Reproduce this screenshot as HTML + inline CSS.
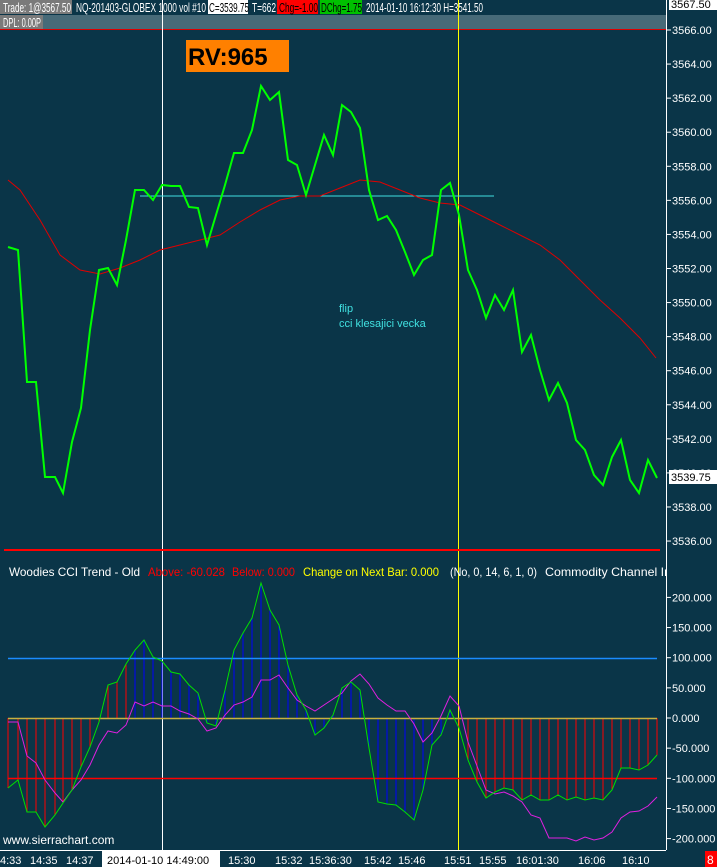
<!DOCTYPE html>
<html><head><meta charset="utf-8"><style>
body{margin:0;background:#0a3548;width:717px;height:867px;overflow:hidden;font-family:"Liberation Sans",sans-serif}
svg{display:block}
text{font-family:"Liberation Sans",sans-serif;font-size:11px}
.h{font-size:13px}
</style></head><body>
<svg id="s" width="717" height="867" xmlns="http://www.w3.org/2000/svg">
<defs><clipPath id="cp"><rect x="0" y="0" width="666" height="867"/></clipPath></defs>
<rect width="717" height="867" fill="#0a3548"/>
<rect x="0" y="0" width="72" height="14" fill="#7a7a7a"/>
<text class="h" x="3" y="12" fill="#fff" textLength="68" lengthAdjust="spacingAndGlyphs">Trade: 1@3567.50</text>
<text class="h" x="76" y="12" fill="#fff" textLength="130" lengthAdjust="spacingAndGlyphs">NQ-201403-GLOBEX  1000 vol  #10</text>
<rect x="208" y="0" width="40" height="14" fill="#fff"/>
<text class="h" x="209" y="12" fill="#000" textLength="40" lengthAdjust="spacingAndGlyphs">C=3539.75</text>
<text class="h" x="252" y="12" fill="#fff" textLength="24" lengthAdjust="spacingAndGlyphs">T=662</text>
<rect x="277" y="0" width="41" height="14" fill="#ff0000"/>
<text class="h" x="279" y="12" fill="#000" textLength="39" lengthAdjust="spacingAndGlyphs">Chg=-1.00</text>
<rect x="320" y="0" width="42" height="14" fill="#00c000"/>
<text class="h" x="321" y="12" fill="#000" textLength="41" lengthAdjust="spacingAndGlyphs">DChg=1.75</text>
<text class="h" x="366" y="12" fill="#fff" textLength="117" lengthAdjust="spacingAndGlyphs">2014-01-10 16:12:30 H=3541.50</text>
<rect x="0" y="15" width="666" height="14" fill="#476a78"/>
<rect x="0" y="15" width="43" height="14" fill="#7a7a7a"/>
<text class="h" x="3" y="27" fill="#fff" textLength="38" lengthAdjust="spacingAndGlyphs">DPL: 0.00P</text>
<line x1="0" y1="29.5" x2="666" y2="29.5" stroke="#d00" stroke-width="1"/>
<rect x="186" y="40" width="103" height="32" fill="#ff8000"/>
<text x="188" y="65" fill="#000" style="font-size:24px;font-weight:bold">RV:965</text>
<line x1="666.5" y1="0" x2="666.5" y2="850" stroke="#fff"/>
<g id="pa"></g>
<line x1="162.5" y1="0" x2="162.5" y2="850" stroke="#fff"/>
<line x1="458.5" y1="0" x2="458.5" y2="850" stroke="#ff0"/>
<line x1="140" y1="196" x2="494" y2="196" stroke="#40e0e0"/>
<polyline fill="none" stroke="#e00000" stroke-width="1" points="8,180 20,190 40,220 60,255 80,270 100,274 120,268 140,260 160,250 200,240 220,235 240,222 260,210 280,200 300,196 320,196 340,188 360,180 380,182 400,190 420,198 440,203 460,205 480,215 500,225 520,235 540,245 560,260 580,280 600,300 620,318 640,338 656,358"/>
<polyline fill="none" stroke="#00ff00" stroke-width="2" points="8,247 18,250 27,382 36,382 45,477 55,477 63,493 72,442 81,408 90,330 99,270 108,268 117,285 126,240 135,190 144,190 153,200 162,185 171,186 180,186 189,207 198,208 207,245 216,215 225,185 234,153 243,153 252,130 261,86 270,100 279,92 288,160 297,165 306,195 315,165 324,135 333,155 342,105 351,112 360,128 369,190 378,220 387,216 396,230 405,252 414,275 423,260 432,255 441,190 450,183 459,215 468,270 477,290 486,318 495,295 504,310 513,290 522,352 531,335 540,370 549,400 558,383 567,403 576,440 585,450 594,475 603,485 612,457 621,440 630,480 639,493 648,460 657,478"/>
<text x="339" y="312" fill="#40e0e0">flip</text>
<text x="339" y="327" fill="#40e0e0">cci klesajici vecka</text>
<line x1="4" y1="550" x2="660" y2="550" stroke="#f00" stroke-width="2"/>
<g clip-path="url(#cp)">
<text x="9" y="576" fill="#fff" style="font-size:12px" textLength="131" lengthAdjust="spacingAndGlyphs">Woodies CCI Trend - Old</text>
<text x="148" y="576" fill="#f00" style="font-size:12px" textLength="77" lengthAdjust="spacingAndGlyphs">Above: -60.028</text>
<text x="232" y="576" fill="#f00" style="font-size:12px" textLength="63" lengthAdjust="spacingAndGlyphs">Below: 0.000</text>
<text x="303" y="576" fill="#ff0" style="font-size:12px" textLength="136" lengthAdjust="spacingAndGlyphs">Change on Next Bar: 0.000</text>
<text x="450" y="576" fill="#fff" style="font-size:12px" textLength="87" lengthAdjust="spacingAndGlyphs">(No, 0, 14, 6, 1, 0)</text>
<text x="545" y="576" fill="#fff" style="font-size:12px" textLength="126" lengthAdjust="spacingAndGlyphs">Commodity Channel In</text>
</g>
<g id="bars"></g>
<line x1="8" y1="658.5" x2="657" y2="658.5" stroke="#1a8cff" stroke-width="1.5"/>
<line x1="8" y1="778.5" x2="657" y2="778.5" stroke="#f00" stroke-width="1.5"/>
<line x1="8" y1="718.5" x2="657" y2="718.5" stroke="#c8b040" stroke-width="1.5"/>
<polyline fill="none" stroke="#e020e0" stroke-width="1" points="8,722 18,722 27,756 36,763 45,780 55,793 63,802 72,790 81,780 90,765 99,745 108,731 117,733 126,725 135,702 144,706 153,702 162,706 171,706 180,711 189,714 198,719 207,731 216,728 225,715 234,705 243,702 252,697 261,680 270,680 279,675 288,688 297,700 306,706 315,711 324,705 333,699 342,693 351,681 360,674 369,684 378,698 387,705 396,711 405,711 414,724 423,742 432,733 441,716 450,696 459,706 468,742 477,766 486,790 495,794 504,792 513,796 522,802 531,815 540,818 549,838 558,838 567,838 576,841 585,837 594,840 603,838 612,832 621,818 630,812 639,811 648,806 657,797"/>
<polyline id="gc" fill="none" stroke="#00e000" stroke-width="1" points="8,788 18,780 27,812 36,812 45,827 55,815 63,803 72,790 81,767 90,747 99,722 108,685 117,682 126,664 135,650 144,640 153,657 162,661 171,672 180,674 189,685 198,693 207,723 216,726 225,690 234,650 243,633 252,618 261,583 270,610 279,625 288,665 297,695 306,710 315,735 324,728 333,715 342,688 351,682 360,690 369,748 378,802 387,804 396,805 405,812 414,820 423,790 432,745 441,735 450,710 459,728 468,760 477,782 486,798 495,792 504,788 513,790 522,800 531,795 540,800 549,800 558,795 567,800 576,797 585,800 594,798 603,800 612,790 621,768 630,768 639,770 648,765 657,755"/>
<text x="3" y="844" fill="#fff" style="font-size:12px">www.sierrachart.com</text>
<line x1="0" y1="850.5" x2="666" y2="850.5" stroke="#fff"/>
<g id="ta" fill="#fff" style="font-size:12px"></g>
<rect x="705" y="851" width="12" height="16" fill="#f00"/>
<text x="707" y="864" fill="#fff" style="font-size:12px">8</text>
</svg>
<script>
var ns="http://www.w3.org/2000/svg",s=document.getElementById('s');
function el(t,a,p,tx){var e=document.createElementNS(ns,t);for(var k in a)e.setAttribute(k,a[k]);if(tx)e.textContent=tx;(p||s).appendChild(e);return e;}
var pa=document.getElementById('pa');
for(var k=0;k<=15;k++){var p=3566-2*k,y=30+k*34.07;
el('line',{x1:667,y1:y,x2:671,y2:y,stroke:'#fff'},pa);
el('text',{x:672,y:y+4,fill:'#fff'},pa,p.toFixed(2));}
el('rect',{x:669,y:0,width:48,height:10,fill:'#fff'},pa);
el('text',{x:671,y:8,fill:'#000'},pa,'3567.50');
el('rect',{x:669,y:470,width:48,height:14,fill:'#fff'},pa);
el('text',{x:671,y:481,fill:'#000'},pa,'3539.75');
var cv=[200,150,100,50,0,-50,-100,-150,-200];
cv.forEach(function(v){var y=718-v*0.603;el('line',{x1:667,y1:y,x2:671,y2:y,stroke:'#fff'},pa);
el('text',{x:672,y:y+4,fill:'#fff'},pa,v.toFixed(3));});
var b=document.getElementById('bars');
document.getElementById('gc').getAttribute('points').trim().split(' ').forEach(function(q){var a=q.split(',').map(Number);
var c=(a[0]<=126||a[0]>=459)?'#ff0000':'#0000ff';
el('line',{x1:a[0],y1:718,x2:a[0],y2:a[1],stroke:c},b);});
var ta=document.getElementById('ta');
el('rect',{x:102,y:851,width:118,height:16,fill:'#fff'},ta);
[[0,'4:33'],[30,'14:35'],[66,'14:37'],[107,'2014-01-10  14:49:00'],[228,'15:30'],[275,'15:32'],[309,'15:36:30'],[364,'15:42'],[398,'15:46'],[444,'15:51'],[479,'15:55'],[516,'16:01:30'],[578,'16:06'],[622,'16:10']].forEach(function(t){
el('text',{x:t[0],y:864,fill:t[1].length>10?'#000':'#fff'},ta,t[1]);});
</script>
</body></html>
